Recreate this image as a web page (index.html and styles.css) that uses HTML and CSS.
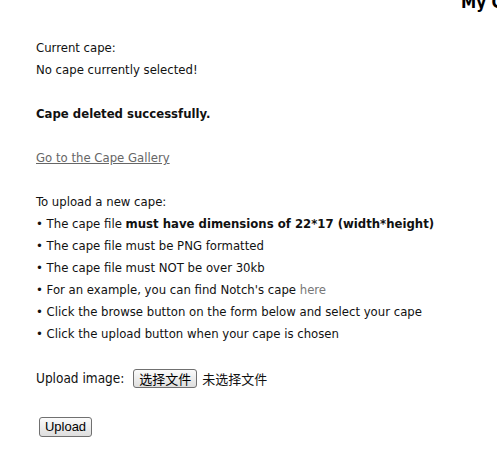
FILE: index.html
```html
<!DOCTYPE html>
<html>
<head>
<meta charset="utf-8">
<link rel="stylesheet" href="styles.css">
</head>
<body>
<div class="title">My Cape</div>
<div class="content">
  <p class="line">Current cape:<br>No cape currently selected!</p>
  <p class="line"><b>Cape deleted successfully.</b></p>
  <p class="line"><a href="#" class="gallery">Go to the Cape Gallery</a></p>
  <p class="line">To upload a new cape:<br>
  • The cape file <b>must have dimensions of 22*17 (width*height)</b><br>
  • The cape file must be PNG formatted<br>
  • The cape file must NOT be over 30kb<br>
  • For an example, you can find Notch's cape <a href="#" class="here">here</a><br>
  • Click the browse button on the form below and select your cape<br>
  • Click the upload button when your cape is chosen</p>
  <form class="upload-form">
    <div class="file-row">
      <span class="label">Upload image:</span>
      <button type="button" class="btn file-btn">选择文件</button>
      <span class="nofile">未选择文件</span>
    </div>
    <div class="submit-row">
      <button type="button" class="btn upload-btn">Upload</button>
    </div>
  </form>
</div>
</body>
</html>
```
FILE: styles.css
```css
html, body { margin: 0; padding: 0; background: #fff; }
body {
  width: 497px; height: 451px; overflow: hidden;
  font-family: "DejaVu Sans Condensed", "DejaVu Sans", sans-serif;
  font-size: 13px; color: #111;
}
.title {
  margin-top: -8px;
  padding-left: 461px;
  white-space: nowrap;
  overflow: hidden;
  font-weight: bold;
  font-size: 17px;
  line-height: 20px;
  color: #000;
}
.content { padding: 25px 0 0 36px; }
.line { margin: 0 0 22px 0; line-height: 22px; }
.gallery { color: #666; text-decoration: underline; }
.here { color: #777; text-decoration: none; }
.upload-form { margin: 0; }
.file-row { display: flex; align-items: center; height: 22px; }
.label { margin-right: 9px; font-size: 13.5px; }
.btn {
  font-size: 13px; color: #000;
  background: linear-gradient(#fbfbfb, #dedede);
  border: 1px solid #707070; border-radius: 3px;
  box-sizing: border-box;
}
.file-btn {
  font-family: "Noto Sans CJK SC", sans-serif;
  width: 64px; height: 19px; padding: 0; line-height: 17px;
}
.nofile { margin-left: 5px; font-family: "Noto Sans CJK SC", sans-serif; font-size: 13px; }
.submit-row { margin-top: 28px; padding-left: 3px; }
.upload-btn {
  font-family: "Liberation Sans", sans-serif;
  width: 53px; height: 20px; padding: 0; line-height: 18px;
}
```
